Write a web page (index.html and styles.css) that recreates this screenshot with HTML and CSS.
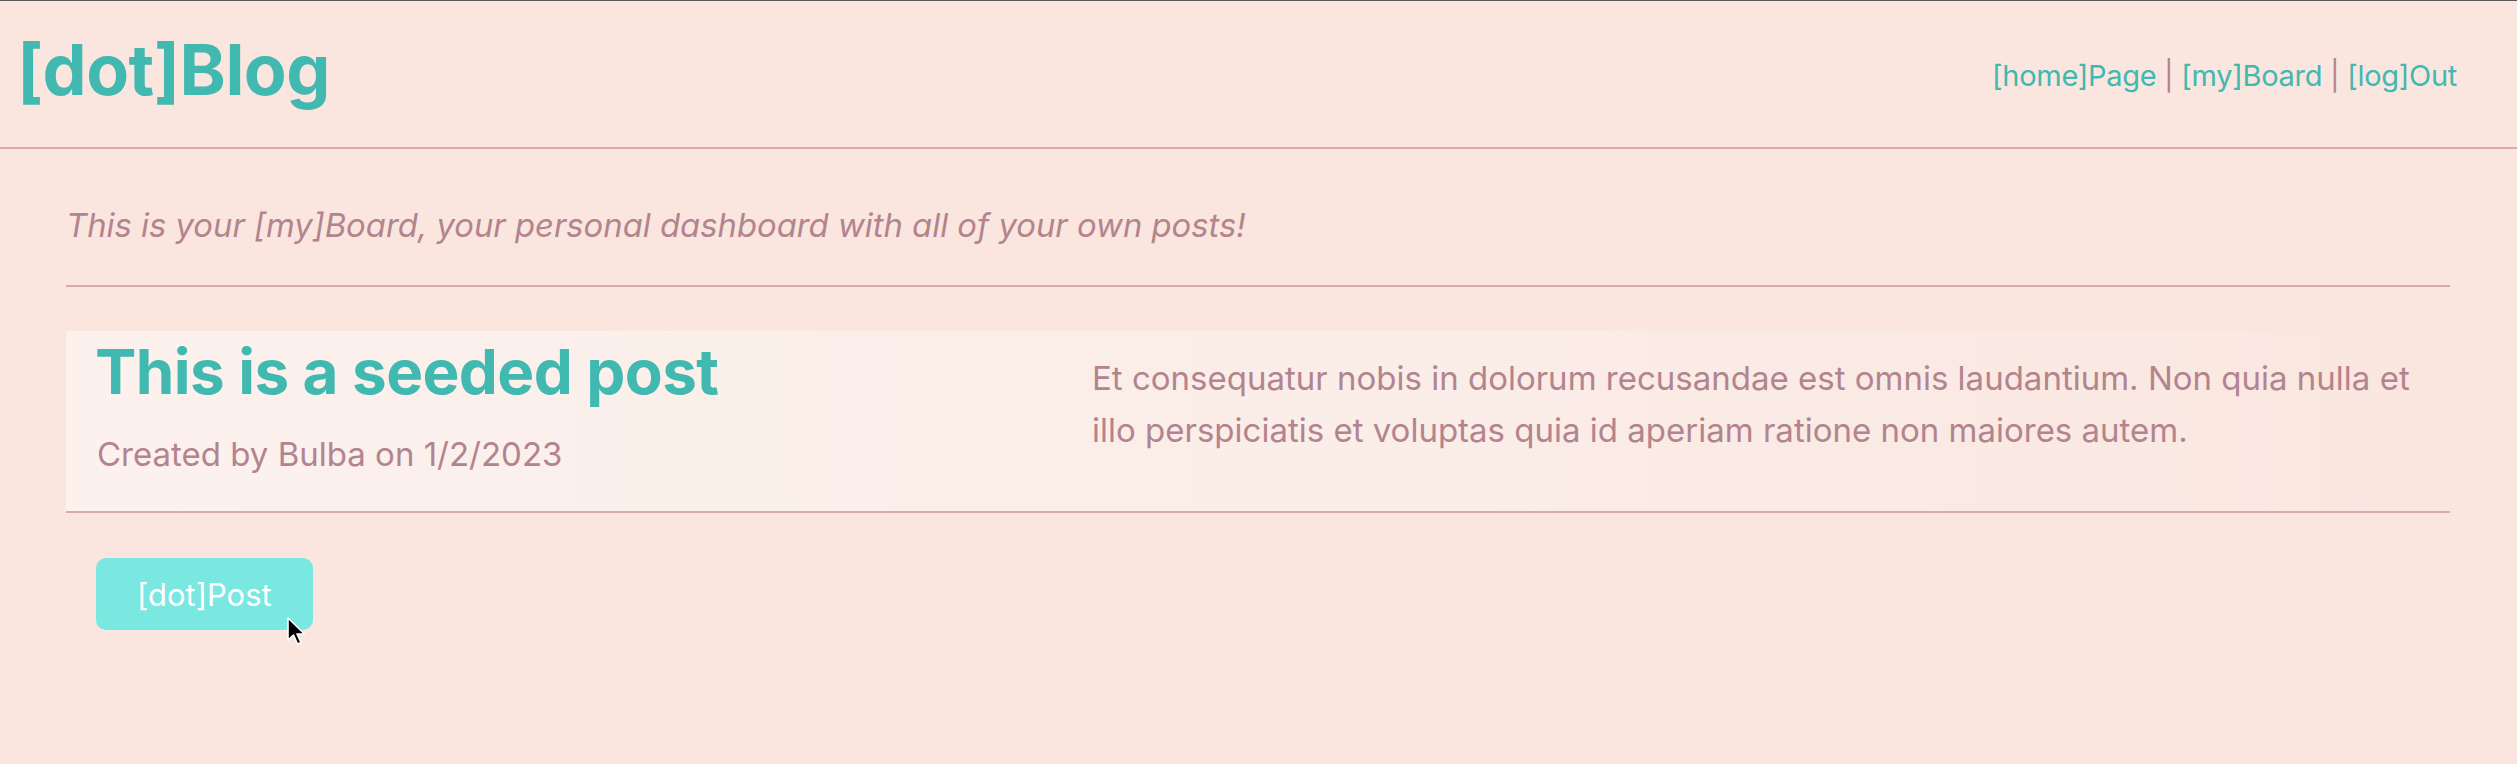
FILE: index.html
```html
<!DOCTYPE html>
<html lang="en">
<head>
<meta charset="utf-8">
<title>[dot]Blog</title>
<link rel="stylesheet" href="styles.css">
</head>
<body>
<header class="site-header">
  <h1 class="logo">[dot]Blog</h1>
  <nav class="nav">
    <a class="nav-link" href="#">[home]Page</a><span class="sep"> | </span><a class="nav-link" href="#">[my]Board</a><span class="sep"> | </span><a class="nav-link" href="#">[log]Out</a>
  </nav>
</header>
<main class="main">
  <section class="intro">
    <p class="intro-text">This is your [my]Board, your personal dashboard with all of your own posts!</p>
  </section>
  <article class="post">
    <div class="post-head">
      <h2 class="post-title">This is a seeded post</h2>
      <p class="post-meta">Created by Bulba on 1/2/2023</p>
    </div>
    <p class="post-body">Et consequatur nobis in dolorum recusandae est omnis laudantium. Non quia nulla et illo perspiciatis et voluptas quia id aperiam ratione non maiores autem.</p>
  </article>
  <div class="actions">
    <button class="btn">[dot]Post</button>
  </div>
</main>
<svg class="cursor" width="22" height="30" viewBox="0 0 22 30">
  <path d="M2 1 L2 23 L7.5 18 L11.5 27 L15 25.5 L11 17 L18.5 17 Z" fill="#000" stroke="#fff" stroke-width="1.6" stroke-linejoin="round"/>
</svg>
</body>
</html>
```

FILE: styles.css
```css
html, body {
  margin: 0;
  padding: 0;
}
body {
  background: #fae6df;
  font-family: Inter, "Noto Sans", sans-serif;
  border-top: 1px solid #5a5a5a;
  min-height: 763px;
  position: relative;
}
.site-header {
  display: flex;
  align-items: center;
  justify-content: space-between;
  height: 146px;
  padding: 0 60px 0 17px;
  border-bottom: 2px solid #dca7af;
}
.logo {
  margin: 0;
  font-size: 70px;
  font-weight: 700;
  color: #41b8b0;
  line-height: 1;
  letter-spacing: -0.5px;
  position: relative;
  top: -4px;
}
.nav {
  font-size: 29px;
  letter-spacing: -0.3px;
  color: #b3848e;
  white-space: pre;
  position: relative;
  top: 1px;
}
.nav-link {
  color: #41b8b0;
  text-decoration: none;
}
.main {
  padding: 0 67px 0 66px;
}
.intro {
  padding: 56px 0 39px;
  border-bottom: 2px solid #dca7af;
}
.intro-text {
  margin: 0;
  font-size: 32.8px;
  font-style: italic;
  color: #b3848e;
  line-height: 41px;
}
.post {
  margin-top: 44px;
  display: grid;
  grid-template-columns: 997px 1fr;
  padding: 2px 18px 31px 29px;
  background: linear-gradient(90deg, #fcf1ed 0%, #fbeee9 45%, #fae9e3 85%, #fae6df 100%);
  border-bottom: 2px solid #dca7af;
}
.post-title {
  margin: 0;
  font-size: 62px;
  font-weight: 700;
  line-height: 77px;
  color: #41b8b0;
  letter-spacing: -0.6px;
}
.post-meta {
  margin: 18px 0 0 2px;
  font-size: 33px;
  line-height: 52px;
  color: #b3848e;
}
.post-body {
  margin: 19px 0 0;
  font-size: 33px;
  line-height: 52px;
  color: #b3848e;
}
.actions {
  padding: 45px 0 0 30px;
}
.btn {
  font-family: inherit;
  font-size: 31px;
  height: 72px;
  padding: 0 41px;
  border: none;
  border-radius: 10px;
  background: #7ae7e0;
  color: #ffffff;
}
.cursor {
  position: absolute;
  left: 286px;
  top: 616px;
}
```
